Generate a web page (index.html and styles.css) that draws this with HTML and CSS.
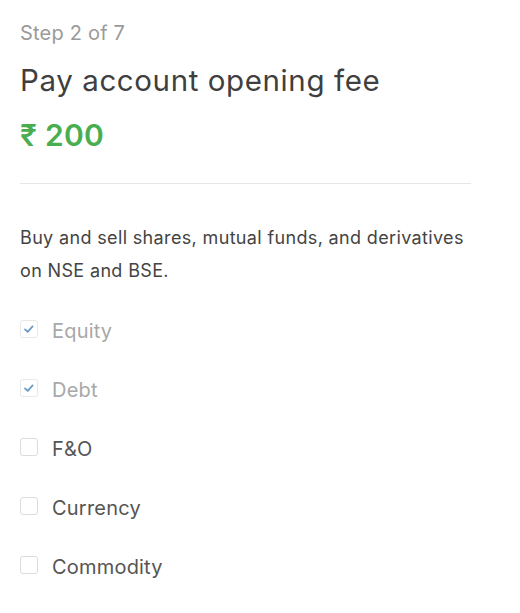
FILE: index.html
```html
<!DOCTYPE html>
<html>
<head>
<meta charset="utf-8">
<link rel="stylesheet" href="styles.css">
</head>
<body>
<div class="page">
  <div class="step">Step 2 of 7</div>
  <h1 class="title">Pay account opening fee</h1>
  <div class="price">₹ 200</div>
  <hr class="divider">
  <p class="desc">Buy and sell shares, mutual funds, and derivatives on NSE and BSE.</p>
  <ul class="segments">
    <li class="seg checked"><span class="box"><svg viewBox="0 0 18 18" width="18" height="18"><path d="M5 9.4 L7.7 11.9 L12.6 6.4" fill="none" stroke="#6b9bc7" stroke-width="1.8" stroke-linecap="round" stroke-linejoin="round"/></svg></span><span class="label">Equity</span></li>
    <li class="seg checked"><span class="box"><svg viewBox="0 0 18 18" width="18" height="18"><path d="M5 9.4 L7.7 11.9 L12.6 6.4" fill="none" stroke="#6b9bc7" stroke-width="1.8" stroke-linecap="round" stroke-linejoin="round"/></svg></span><span class="label">Debt</span></li>
    <li class="seg"><span class="box"></span><span class="label">F&amp;O</span></li>
    <li class="seg"><span class="box"></span><span class="label">Currency</span></li>
    <li class="seg"><span class="box"></span><span class="label">Commodity</span></li>
  </ul>
</div>
</body>
</html>
```

FILE: styles.css
```css
html, body {
  margin: 0;
  padding: 0;
  background: #ffffff;
}
body {
  font-family: Inter, "Noto Sans", sans-serif;
}
.page {
  width: 451px;
  padding: 19px 0 0 20px;
}
.step {
  font-size: 20px;
  line-height: 28px;
  color: #9a9a9a;
  letter-spacing: 0.2px;
}
.title {
  margin: 14px 0 0;
  font-size: 29.5px;
  line-height: 38px;
  font-weight: 400;
  color: #3f3f3f;
  letter-spacing: 0.6px;
}
.price {
  margin-top: 18px;
  font-size: 30px;
  line-height: 36px;
  font-weight: 600;
  color: #4aae50;
  letter-spacing: 0.3px;
}
.divider {
  margin: 30px 0 0;
  border: 0;
  height: 1px;
  background: #e6e6e6;
}
.desc {
  width: 458px;
  margin: 37px 0 0;
  font-size: 18px;
  line-height: 33px;
  color: #444444;
  letter-spacing: 0.35px;
}
.segments {
  list-style: none;
  margin: 32px 0 0;
  padding: 0;
  display: flex;
  flex-direction: column;
  gap: 35px;
}
.seg {
  display: flex;
  align-items: center;
  gap: 14px;
  height: 24px;
}
.box {
  width: 16px;
  height: 16px;
  border: 1px solid #dcdcdc;
  border-radius: 3px;
  display: flex;
  align-items: center;
  justify-content: center;
  flex: none;
  margin-top: -4px;
}
.box svg {
  flex: none;
}
.label {
  font-size: 20px;
  color: #555555;
  letter-spacing: 0.2px;
}
.seg.checked .label {
  color: #a8a8a8;
}
.seg.checked .box {
  border-color: #e8e8e8;
}
```
